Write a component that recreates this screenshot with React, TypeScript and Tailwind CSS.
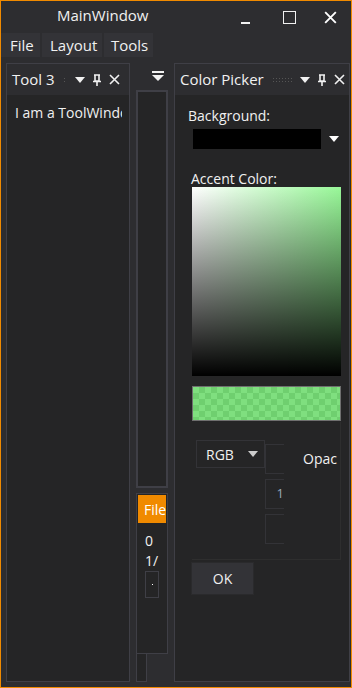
import React from "react";

const font = { fontFamily: '"Segoe UI", "Open Sans", "Noto Sans", sans-serif' };

function Arrow({ className = "" }: { className?: string }) {
  return (
    <svg width="10" height="6" viewBox="0 0 10 6" className={className}>
      <path d="M0 0H10L5 6Z" fill="currentColor" />
    </svg>
  );
}

function Pin() {
  return (
    <svg width="10" height="12" viewBox="0 0 10 12">
      <path d="M2 1H8M3 1V7H7V1M1 7.5H9M5 8V12" stroke="currentColor" strokeWidth="1.6" fill="none" />
    </svg>
  );
}

function Close({ size = 11 }: { size?: number }) {
  return (
    <svg width={size} height={size} viewBox="0 0 11 11">
      <path d="M1 1L10 10M10 1L1 10" stroke="currentColor" strokeWidth="1.6" />
    </svg>
  );
}

function PanelHeader({ title, grip, pr }: { title: string; grip: string; pr: string }) {
  return (
    <div className={`flex h-[31px] items-center bg-[#2d2d30] pl-[5px] text-[15px] text-[#f1f1f1] ${pr}`}>
      <span className="shrink-0">{title}</span>
      <div className="flex-1 px-2">
        <div className={`h-[6px] bg-[radial-gradient(#555_0.7px,transparent_0.8px)] bg-[length:3px_3px] ${grip}`} />
      </div>
      <div className="flex items-center gap-[7px] text-[#f1f1f1]">
        <Arrow />
        <Pin />
        <Close />
      </div>
    </div>
  );
}

export default function App() {
  return (
    <div
      className="flex h-[688px] w-[352px] flex-col border border-[#f08a00] bg-[#2d2d30] text-[#f1f1f1]"
      style={font}
    >
      {/* title bar */}
      <div className="relative flex h-[32px] shrink-0 items-center pb-[3px]">
        <span className="ml-[56px] text-[15px]">MainWindow</span>
        <div className="absolute right-0 top-0 flex h-[32px] items-center">
          <div className="flex w-[46px] justify-center pl-[6px] pt-[12px]">
            <div className="h-[2px] w-[9px] bg-[#f1f1f1]" />
          </div>
          <div className="flex w-[46px] justify-center pl-[2px]">
            <div className="h-[13px] w-[13px] border-[1.5px] border-[#f1f1f1]" />
          </div>
          <div className="flex w-[40px] justify-start pl-[13px] text-white">
            <Close size={13} />
          </div>
        </div>
      </div>

      {/* menu */}
      <div className="flex h-[24px] shrink-0 gap-[2px] text-[15px]">
        <div className="flex w-[39px] items-center bg-[#333337] pl-[9px]">File</div>
        <div className="flex w-[60px] items-center bg-[#333337] pl-[8px]">Layout</div>
        <div className="flex w-[49px] items-center bg-[#333337] pl-[7px]">Tools</div>
      </div>

      {/* dock area */}
      <div className="flex flex-1 gap-[6px] pl-[5px] pt-[6px] pb-[6px]">
        {/* left panel */}
        <div className="flex w-[124px] flex-col border border-[#3f3f46] bg-[#252526]">
          <PanelHeader title="Tool 3" grip="w-[2px]" pr="pr-[9px]" />
          <div className="mr-[7px] overflow-hidden whitespace-nowrap pl-[8px] pt-[7px] text-[14px]">I am a ToolWindow</div>
        </div>

        {/* middle column */}
        <div className="flex w-[32px] flex-col">
          <div className="flex h-[27px] items-center justify-center pl-[12px]">
            <svg width="12" height="11" viewBox="0 0 12 11">
              <rect x="0" y="0" width="12" height="2" fill="#f1f1f1" />
              <path d="M0 4H12L6 10Z" fill="#f1f1f1" />
            </svg>
          </div>
          <div className="h-[398px] border-2 border-[#3f3f46] bg-[#252526]" />
          <div className="mt-[5px] flex h-[161px] flex-col border border-[#3f3f46] bg-[#252526]">
            <div className="mx-px mt-[1px] flex h-[28px] items-center bg-[#f08a00] pl-[6px] text-[14px] text-white">File</div>
            <div className="pl-[8px] pt-[8px] text-[14px] leading-[20px]">
              <div>0</div>
              <div>1/</div>
            </div>
            <div className="ml-[8px] flex h-[27px] w-[14px] items-center justify-center border border-[#3f3f46]">
              <div className="h-px w-px bg-white" />
            </div>
          </div>
          <div className="h-[28px] w-[11px] border-x border-b border-[#3f3f46] bg-[#252526]" />
        </div>

        {/* color picker panel */}
        <div className="flex w-[176px] flex-col border border-[#3f3f46] bg-[#252526]">
          <PanelHeader title="Color Picker" grip="ml-auto w-[20px]" pr="pr-[7px]" />
          <div className="flex flex-col pl-[13px] pt-[10px] text-[14px]">
            <div className="text-[14px]">Background:</div>
            <div className="mt-[3px] flex items-center">
              <div className="ml-[5px] h-[20px] w-[128px] bg-black" />
              <Arrow className="ml-[8px] text-white" />
            </div>
            <div className="ml-[3px] mt-[19px]">Accent Color:</div>
            <div className="ml-[4px] mt-[-2px] h-[189px] w-[149px] bg-[linear-gradient(to_bottom,transparent,#000),linear-gradient(to_right,#fff,#98f898)]" />
            <div className="ml-[4px] mt-[10px] h-[35px] w-[149px] border border-[#6f6f6f] bg-[#78d878] bg-[conic-gradient(#6fcf6f_25%,#7fdf7f_0_50%,#6fcf6f_0_75%,#7fdf7f_0)] bg-[length:12px_12px]" />
            <div className="ml-[4px] mt-[1px] flex h-[138px] w-[149px] items-start border-r border-b border-[#2e2e2e] pt-[18px]">
              <div className="ml-[4px] flex h-[28px] w-[69px] items-center border border-[#333337] pl-[9px]">
                RGB
                <Arrow className="ml-[14px] text-[#ccc]" />
              </div>
              <div className="flex flex-col gap-[5px] pt-[4px]">
                <div className="h-[30px] w-[19px] border-y border-l border-[#333337]" />
                <div className="flex h-[30px] w-[19px] items-center justify-end border-y border-l border-[#333337] text-[13px] text-[#9ab]">1</div>
                <div className="h-[30px] w-[19px] border-y border-l border-[#333337]" />
              </div>
              <div className="ml-[19px] mt-[8px]">Opac</div>
            </div>
            <div className="ml-[3px] mt-[2px] flex h-[33px] w-[63px] items-center justify-center border border-[#2a2a2c] bg-[#333337]">OK</div>
          </div>
        </div>
      </div>
    </div>
  );
}
